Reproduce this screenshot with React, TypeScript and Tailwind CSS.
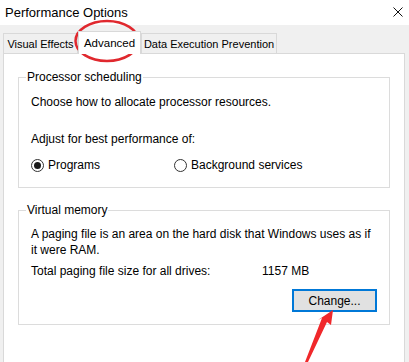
import React from 'react';

const Radio = ({ checked, label }: { checked?: boolean; label: string }) => (
    <label className="flex items-center gap-[4px]">
        <span className="w-[13px] h-[13px] rounded-full border border-[#333] bg-white flex items-center justify-center">
            {checked && <span className="w-[7px] h-[7px] rounded-full bg-[#1a1a1a]" />}
        </span>
        <span>{label}</span>
    </label>
);

const Tab = ({ label, width, selected }: { label: string; width: string; selected?: boolean }) =>
    selected ? (
        <div
            className={`relative z-10 -mb-px h-[23px] pt-[3px] bg-white border border-b-0 border-[#d9d9d9] text-[11.5px] text-center whitespace-nowrap ${width}`}
        >
            {label}
        </div>
    ) : (
        <div
            className={`h-[20px] pt-[2px] bg-[#f0f0f0] border border-b-0 border-[#d9d9d9] text-[11px] text-center whitespace-nowrap ${width}`}
        >
            {label}
        </div>
    );

export default function App() {
    return (
        <div
            className="relative w-[409px] h-[362px] overflow-hidden bg-[#f0f0f0] text-[12px] leading-[16px] text-black"
            style={{ fontFamily: '"Segoe UI", "Liberation Sans", Arial, sans-serif' }}
        >
            {/* title bar */}
            <div className="h-[25px] bg-white flex items-center justify-between pl-[5px] pr-[6px]">
                <span className="text-[13px]">Performance Options</span>
                <svg width="10" height="10" viewBox="0 0 10 10" className="mt-[-1px]">
                    <path d="M0.5 0.5 L9.5 9.5 M9.5 0.5 L0.5 9.5" stroke="#111" strokeWidth="1" />
                </svg>
            </div>

            {/* tabs */}
            <div className="flex items-end h-[28px] px-[3px]">
                <Tab label="Visual Effects" width="w-[75px]" />
                <Tab label="Advanced" width="w-[63px]" selected />
                <Tab label="Data Execution Prevention" width="w-[136px]" />
            </div>

            {/* panel */}
            <div className="mx-[3px] w-[402px] h-[320px] bg-white border border-[#d9d9d9] px-[14px] pt-[15px]">
                <fieldset className="border border-[#dcdcdc] px-[12px] pt-[9px] pb-[14px]">
                    <legend className="-ml-[5px] px-[1px]">Processor scheduling</legend>
                    <p>Choose how to allocate processor resources.</p>
                    <p className="mt-[21px]">Adjust for best performance of:</p>
                    <div className="flex mt-[10px]">
                        <div className="w-[143px]">
                            <Radio checked label="Programs" />
                        </div>
                        <Radio label="Background services" />
                    </div>
                </fieldset>

                <fieldset className="mt-[14px] border border-[#dcdcdc] pl-[12px] pr-[12px] pt-[8px] pb-[12px]">
                    <legend className="-ml-[5px] px-[1px]">Virtual memory</legend>
                    <p>A paging file is an area on the hard disk that Windows uses as if it were RAM.</p>
                    <div className="flex mt-[5px]">
                        <span className="w-[231px]">Total paging file size for all drives:</span>
                        <span>1157 MB</span>
                    </div>
                    <div className="flex justify-end mt-[10px]">
                        <button className="w-[85px] h-[23px] bg-[#e1e1e1] border-2 border-[#0078d7] text-[12px]">
                            Change...
                        </button>
                    </div>
                </fieldset>
            </div>

            {/* annotations */}
            <svg className="absolute left-[73px] top-[19px]" width="68" height="44" viewBox="0 0 68 44">
                <ellipse cx="34" cy="22" rx="31.5" ry="20" fill="none" stroke="#e0282e" strokeWidth="2.5" />
            </svg>
            <svg className="absolute left-[300px] top-[305px]" width="40" height="57" viewBox="0 0 40 57">
                <polygon points="33,5 31,20 27,17 8,57 5,57 22,13 18,15" fill="#f0282b" />
            </svg>
        </div>
    );
}
